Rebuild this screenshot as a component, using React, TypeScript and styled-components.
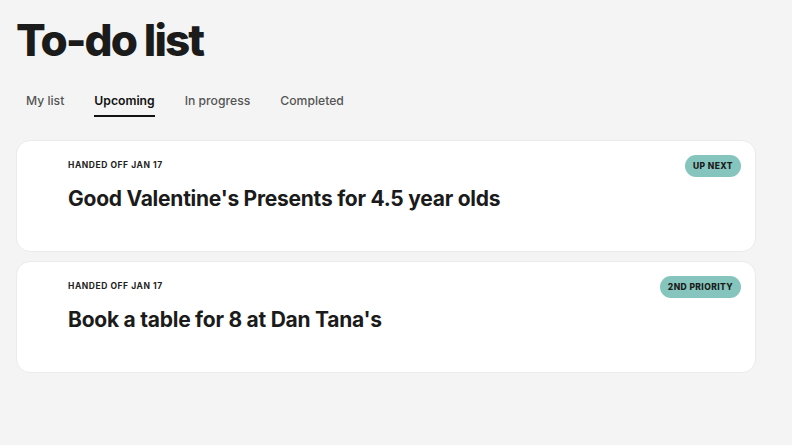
import React from 'react';
import styled, { createGlobalStyle } from 'styled-components';

const GlobalStyle = createGlobalStyle`
  body {
    margin: 0;
    background: #f4f4f4;
    font-family: Inter, "Liberation Sans", sans-serif;
    color: #1b1b1b;
  }
`;

const Page = styled.div`
  width: 740px;
  padding: 14px 0 0 16px;
`;

const Title = styled.h1`
  margin: 0;
  font-size: 44px;
  font-weight: 800;
  letter-spacing: -1.9px;
  line-height: 52px;
`;

const Tabs = styled.nav`
  display: flex;
  gap: 30px;
  margin: 27px 0 23px 10px;
`;

const Tab = styled.div<{ active?: boolean }>`
  font-size: 12.2px;
  font-weight: ${({ active }) => (active ? 600 : 500)};
  color: ${({ active }) => (active ? '#111' : '#555')};
  padding-bottom: 7px;
  border-bottom: 2px solid ${({ active }) => (active ? '#111' : 'transparent')};
`;

const List = styled.div`
  display: flex;
  flex-direction: column;
  gap: 9px;
`;

const Card = styled.div`
  position: relative;
  height: 112px;
  box-sizing: border-box;
  background: #fff;
  border: 1px solid #ebebeb;
  border-radius: 14px;
  padding: 19px 15px 0 51px;
`;

const Label = styled.div`
  font-size: 8.5px;
  font-weight: 700;
  letter-spacing: 0.55px;
  color: #222;
`;

const Heading = styled.h2`
  margin: 16px 0 0;
  font-size: 21px;
  font-weight: 700;
  letter-spacing: -0.25px;
  color: #1b1b1b;
`;

const Badge = styled.span`
  position: absolute;
  top: 14px;
  right: 14px;
  height: 22px;
  padding: 0 8px;
  display: flex;
  align-items: center;
  border-radius: 11px;
  background: #85c5bd;
  font-size: 8.5px;
  font-weight: 800;
  letter-spacing: 0.4px;
  color: #1b1b1b;
`;

const tasks = [
  { badge: 'UP NEXT', title: "Good Valentine's Presents for 4.5 year olds" },
  { badge: '2ND PRIORITY', title: "Book a table for 8 at Dan Tana's" },
];

export default function App() {
  return (
    <>
      <GlobalStyle />
      <Page>
        <Title>To-do list</Title>
        <Tabs>
          <Tab>My list</Tab>
          <Tab active>Upcoming</Tab>
          <Tab>In progress</Tab>
          <Tab>Completed</Tab>
        </Tabs>
        <List>
          {tasks.map((t) => (
            <Card key={t.title}>
              <Label>HANDED OFF JAN 17</Label>
              <Heading>{t.title}</Heading>
              <Badge>{t.badge}</Badge>
            </Card>
          ))}
        </List>
      </Page>
    </>
  );
}
